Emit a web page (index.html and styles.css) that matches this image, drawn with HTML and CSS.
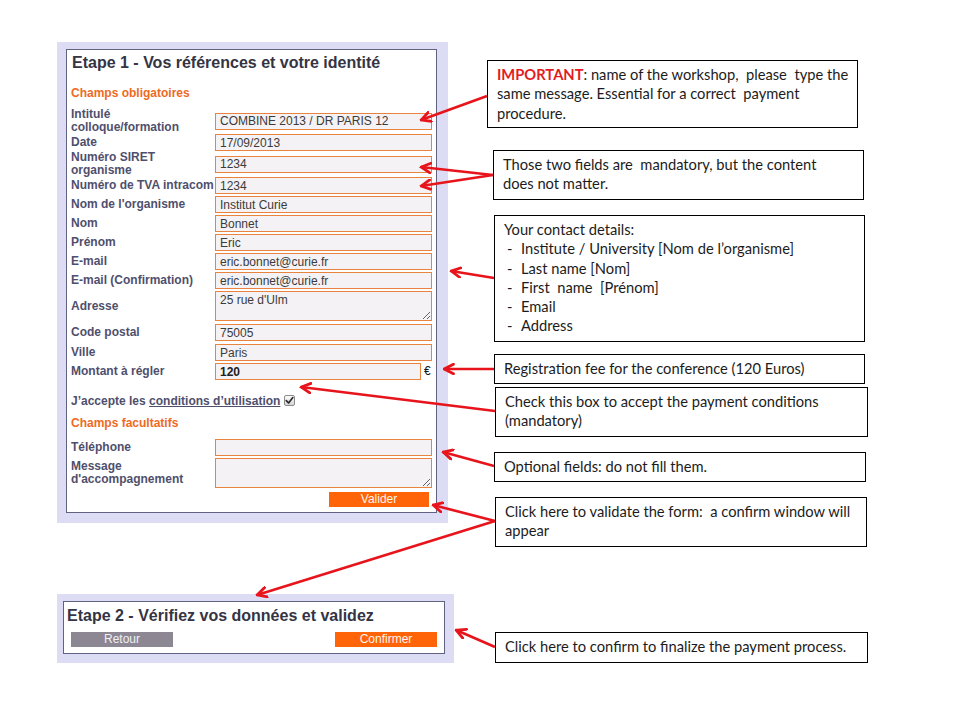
FILE: index.html
```html
<!DOCTYPE html>
<html lang="fr">
<head>
<meta charset="utf-8">
<title>Inscription - étapes</title>
<link rel="stylesheet" href="styles.css">
</head>
<body>
<div class="page">
  <div class="left">
    <section class="panel panel1">
      <div class="inner">
        <h1 class="title">Etape 1 - Vos références et votre identité</h1>
        <h2 class="section">Champs obligatoires</h2>
        <div class="rows">
          <div class="row mb0"><span class="lbl">Intitulé<br>colloque/formation</span><input class="field" type="text" value="COMBINE 2013 / DR PARIS 12" readonly></div>
          <div class="row mb0"><span class="lbl">Date</span><input class="field" type="text" value="17/09/2013" readonly></div>
          <div class="row mb0"><span class="lbl">Numéro SIRET<br>organisme</span><input class="field" type="text" value="1234" readonly></div>
          <div class="row"><span class="lbl">Numéro de TVA intracom</span><input class="field" type="text" value="1234" readonly></div>
          <div class="row"><span class="lbl">Nom de l'organisme</span><input class="field" type="text" value="Institut Curie" readonly></div>
          <div class="row"><span class="lbl">Nom</span><input class="field" type="text" value="Bonnet" readonly></div>
          <div class="row"><span class="lbl">Prénom</span><input class="field" type="text" value="Eric" readonly></div>
          <div class="row"><span class="lbl">E-mail</span><input class="field" type="text" value="eric.bonnet@curie.fr" readonly></div>
          <div class="row"><span class="lbl">E-mail (Confirmation)</span><input class="field" type="text" value="eric.bonnet@curie.fr" readonly></div>
          <div class="row mb3"><span class="lbl">Adresse</span><textarea class="field area" readonly>25 rue d'Ulm</textarea></div>
          <div class="row mb3"><span class="lbl">Code postal</span><input class="field" type="text" value="75005" readonly></div>
          <div class="row"><span class="lbl">Ville</span><input class="field" type="text" value="Paris" readonly></div>
          <div class="row mb0"><span class="lbl">Montant à régler</span><span class="amount"><input class="field short bold" type="text" value="120" readonly><span class="euro">€</span></span></div>
        </div>
        <div class="accept">J’accepte les <span class="link">conditions d’utilisation</span><span class="check"><svg width="9" height="9" viewBox="0 0 9 9"><path d="M1.3 4.6 L3.6 7 L7.8 1.6" fill="none" stroke="#2b2b2b" stroke-width="1.7" stroke-linecap="round" stroke-linejoin="round"/></svg></span></div>
        <h2 class="section sec2">Champs facultatifs</h2>
        <div class="rows rows2">
          <div class="row"><span class="lbl">Téléphone</span><input class="field" type="text" value="" readonly></div>
          <div class="row mb0"><span class="lbl">Message<br>d'accompagnement</span><textarea class="field area" readonly></textarea></div>
        </div>
        <div class="actions"><span class="btn btn-orange">Valider</span></div>
      </div>
    </section>

    <section class="panel panel2">
      <div class="inner">
        <h1 class="title">Etape 2 - Vérifiez vos données et validez</h1>
        <div class="btnrow"><span class="btn btn-gray">Retour</span><span class="btn btn-orange">Confirmer</span></div>
      </div>
    </section>
  </div>

  <div class="right">
    <div class="note n1"><span class="imp">IMPORTANT</span><span>: name of the workshop,&nbsp; please&nbsp; type the</span><br><span>same message. Essential for a correct&nbsp; payment</span><br><span>procedure.</span></div>
    <div class="note n2">Those two fields are&nbsp; mandatory, but the content<br>does not matter.</div>
    <div class="note n3">
      <div>Your contact details:</div>
      <ul class="dash">
        <li>Institute / University [Nom de l’organisme]</li>
        <li>Last name [Nom]</li>
        <li>First&nbsp; name&nbsp; [Prénom]</li>
        <li>Email</li>
        <li>Address</li>
      </ul>
    </div>
    <div class="note n4">Registration fee for the conference (120 Euros)</div>
    <div class="note n5">Check this box to accept the payment conditions<br>(mandatory)</div>
    <div class="note n6">Optional fields: do not fill them.</div>
    <div class="note n7">Click here to validate the form:&nbsp; a confirm window will<br>appear</div>
    <div class="note n8">Click here to confirm to finalize the payment process.</div>
  </div>

  <svg class="arrows" width="960" height="720" viewBox="0 0 960 720">
    <defs>
      <marker id="ah" viewBox="0 0 12 12" refX="1.5" refY="6" markerWidth="12" markerHeight="12" markerUnits="userSpaceOnUse" orient="auto">
        <path d="M11 1.2 L1.8 6 L11 10.8" fill="none" stroke="#e8141c" stroke-width="2.8" stroke-linecap="round" stroke-linejoin="miter"/>
      </marker>
    </defs>
    <g stroke="#e8141c" stroke-width="2.6" fill="none" marker-start="url(#ah)">
      <line x1="421" y1="120" x2="487" y2="96"/>
      <line x1="421" y1="167" x2="493" y2="175"/>
      <line x1="421" y1="186" x2="493" y2="175"/>
      <line x1="451" y1="271" x2="494" y2="278"/>
      <line x1="444" y1="369" x2="494" y2="369"/>
      <line x1="301" y1="387" x2="495" y2="411"/>
      <line x1="443" y1="452" x2="494" y2="466"/>
      <line x1="433" y1="505" x2="495" y2="521"/>
      <line x1="257" y1="595" x2="495" y2="521"/>
      <line x1="456" y1="630" x2="495" y2="647"/>
    </g>
  </svg>
</div>
</body>
</html>
```

FILE: styles.css
```css
* { box-sizing: border-box; }
html, body { margin: 0; background: #ffffff; }
body { font-family: "Liberation Sans", Arial, sans-serif; }

.page {
  position: relative;
  width: 960px;
  height: 720px;
  display: flex;
  align-items: flex-start;
  padding: 42px 0 0 57px;
}

/* ---------- left column: form panels ---------- */
.left { width: 397px; display: flex; flex-direction: column; }

.panel { background: #dcdcf4; }
.inner { background: #ffffff; border: 1px solid #616180; }

.panel1 { width: 391px; padding: 7px 11px 10px 9px; }
.panel1 .inner { padding: 3px 5px 5px 4px; }

.title {
  margin: 0;
  font: bold 16px/20px "Liberation Sans", Arial, sans-serif;
  color: #343444;
}
.panel1 .title { padding-left: 1px; }

.section {
  margin: 13px 0 0;
  font: bold 12px/14px "Liberation Sans", Arial, sans-serif;
  color: #ee6a1f;
}
.sec2 { margin-top: 8px; }

.rows { margin-top: 8px; display: flow-root; }
.rows2 { margin-top: 9px; }

.row {
  display: grid;
  grid-template-columns: 144px 217px;
  align-items: center;
  margin-bottom: 2px;
}
.mb0 { margin-bottom: 0; }
.mb3 { margin-bottom: 3px; }

.lbl {
  font: bold 12px/13px "Liberation Sans", Arial, sans-serif;
  color: #4f4f6d;
}

.field {
  display: block;
  width: 217px;
  height: 17px;
  margin: 0;
  padding: 0 4px;
  border: 1px solid #e9843f;
  border-radius: 0;
  background: #f4f2f4;
  font: 12px/15px "Liberation Sans", Arial, sans-serif;
  color: #3b3b3b;
  outline: none;
}
.area { height: 30px; padding: 1px 4px; resize: both; overflow: hidden; }
.short { width: 206px; }
.bold { font-weight: bold; color: #222; }

.amount { display: flex; align-items: center; }
.euro { margin-left: 3px; font: 12px/15px "Liberation Sans", Arial, sans-serif; color: #111; }

.accept {
  margin-top: 14px;
  font: bold 12px/14px "Liberation Sans", Arial, sans-serif;
  color: #4f4f6d;
  display: flex;
  align-items: center;
  white-space: pre;
}
.link { text-decoration: underline; }
.check {
  display: inline-flex;
  align-items: center;
  justify-content: center;
  width: 11px;
  height: 11px;
  margin-left: 4px;
  margin-top: -2px;
  border: 1px solid #8c8c8c;
  border-radius: 2px;
  background: linear-gradient(#fdfdfd, #d4d4d4);
}

.actions { display: flex; justify-content: flex-end; margin-top: 4px; padding-right: 2px; }

.btn {
  display: block;
  height: 15px;
  font: 12px/15px "Liberation Sans", Arial, sans-serif;
  color: #fff4ee;
  text-align: center;
}
.btn-orange { background: #ff6508; width: 100px; }
.btn-gray { background: #8d8793; width: 102px; color: #f2f0f4; }

.panel2 { width: 397px; margin-top: 71px; padding: 7px 9px 9px 6px; }
.panel2 .inner { padding: 4px 7px 6px 3px; }
.btnrow { display: flex; justify-content: space-between; margin-top: 6px; padding-left: 4px; }
.panel2 .btn-orange { width: 102px; }

/* ---------- right column: callouts ---------- */
.right { margin-left: 33px; padding-top: 18px; display: flex; flex-direction: column; }

.note {
  border: 1px solid #000;
  background: #fff;
  font: 14.7px/19.3px Lato, "Open Sans", sans-serif;
  color: #1c1c1c;
  padding: 4px 2px 0 9px;
  white-space: nowrap;
}
.imp { color: #e31b23; font-weight: bold; }

.n1 { width: 371px; height: 68px; }
.n2 { width: 371px; height: 50px; margin: 22px 0 0 6px; }
.n3 { width: 371px; height: 127px; margin: 15px 0 0 7px; }
.n4 { width: 371px; height: 30px; margin: 12px 0 0 7px; }
.n5 { width: 373px; height: 50px; margin: 3px 0 0 8px; }
.n6 { width: 372px; height: 30px; margin: 15px 0 0 7px; }
.n7 { width: 372px; height: 50px; margin: 15px 0 0 8px; }
.n8 { width: 373px; height: 31px; margin: 85px 0 0 8px; }

.dash { list-style: none; margin: 0; padding: 0 0 0 17px; }
.dash li { position: relative; }
.dash li::before { content: "-"; position: absolute; left: -14px; top: 0; }

/* ---------- annotation arrows (overlay) ---------- */
.arrows { position: absolute; left: 0; top: 0; pointer-events: none; }
```
